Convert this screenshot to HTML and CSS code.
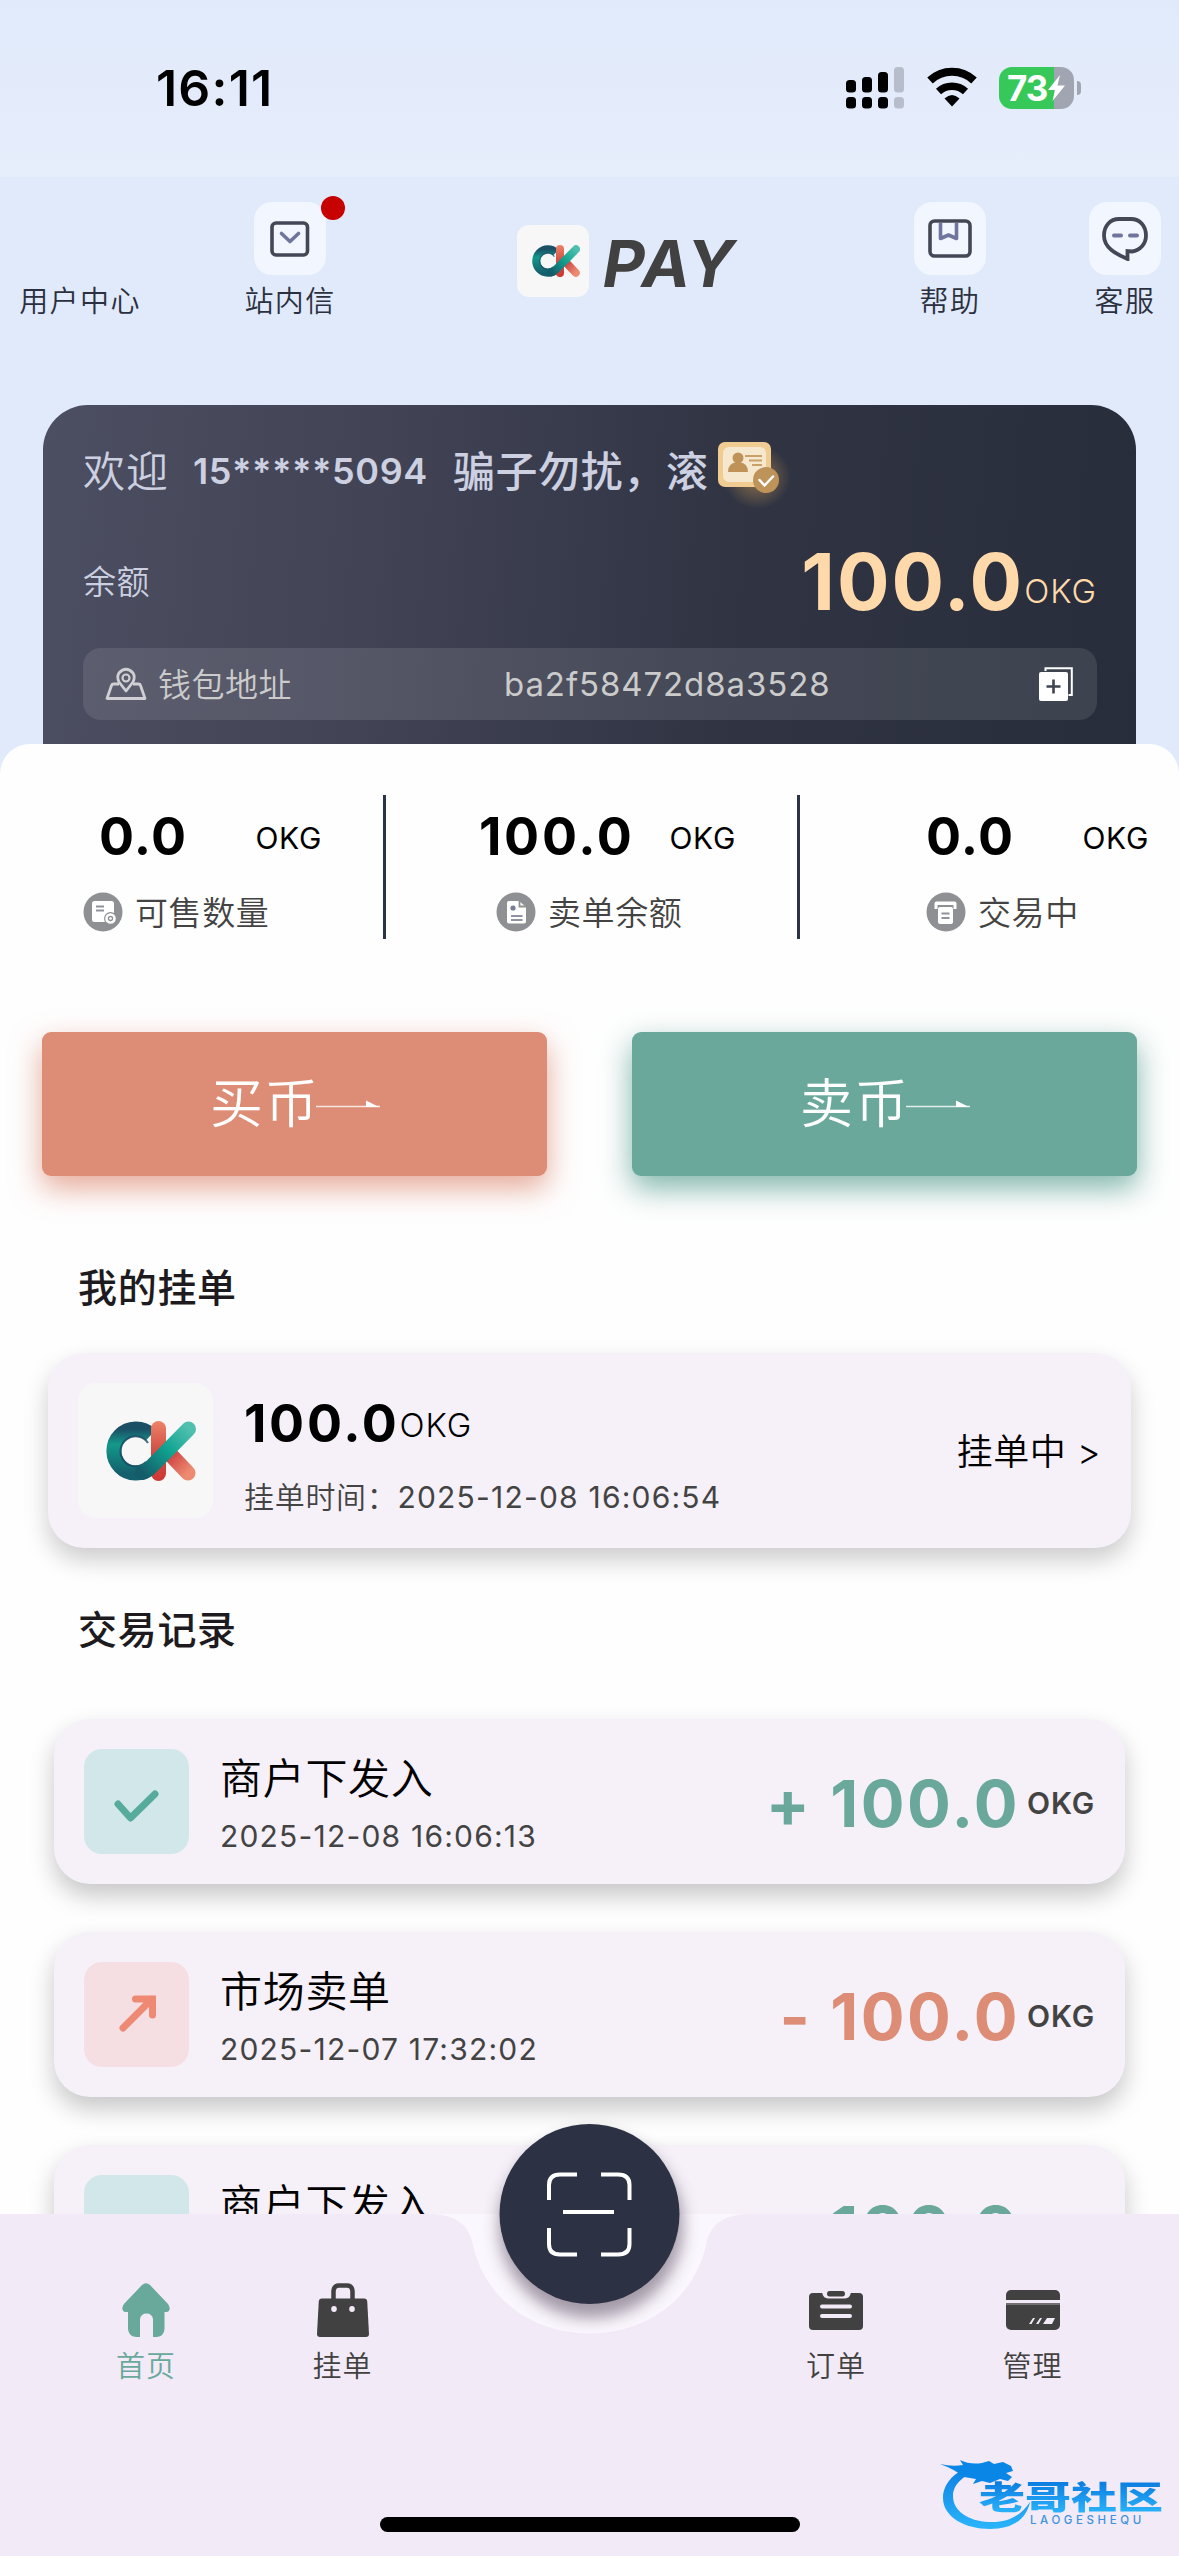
FILE: index.html
```html
<!DOCTYPE html>
<html lang="zh-CN">
<head>
<meta charset="utf-8">
<title>PAY</title>
<link rel="stylesheet" href="styles.css">
</head>
<body>
<svg class="defs" width="0" height="0" aria-hidden="true">
  <defs>
    <linearGradient id="teal" x1="0" y1="0" x2="0" y2="1"><stop offset="0" stop-color="#1b4f66"/><stop offset=".35" stop-color="#12998a"/><stop offset="1" stop-color="#14606c"/></linearGradient>
    <linearGradient id="tealArm" x1="0" y1="1" x2="1" y2="0"><stop offset="0" stop-color="#145c69"/><stop offset=".55" stop-color="#11a491"/><stop offset="1" stop-color="#4fbfae"/></linearGradient>
    <linearGradient id="red" x1="0" y1="0" x2="0" y2="1"><stop offset="0" stop-color="#ee8268"/><stop offset=".5" stop-color="#d04e45"/><stop offset="1" stop-color="#cf3733"/></linearGradient>
    <linearGradient id="redLeg" x1="0" y1="0" x2="1" y2="1"><stop offset="0" stop-color="#c8393a"/><stop offset="1" stop-color="#ee8a72"/></linearGradient>
    <linearGradient id="blue" x1="0" y1="0" x2="0" y2="1"><stop offset="0" stop-color="#0a7be0"/><stop offset="1" stop-color="#2bb5fb"/></linearGradient>
    <symbol id="ok" viewBox="0 0 90 60">
      <path d="M45 46A22 22 0 1 1 45 14" fill="none" stroke="url(#teal)" stroke-width="15"/>
      <path d="M40 41A15 15 0 1 1 42 22" fill="none" stroke="#174a60" stroke-width="2" opacity=".8"/>
      <rect x="45" y="0" width="15" height="60" rx="7.5" fill="url(#red)"/>
      <path d="M62 31L82 52" stroke="url(#redLeg)" stroke-width="15" stroke-linecap="round"/>
      <path d="M82.5 8L45 46Q41 50 36 51.500" fill="none" stroke="url(#tealArm)" stroke-width="15" stroke-linecap="round"/>
    </symbol>
    <symbol id="check" viewBox="0 0 105 105"><path d="M34 55L46.500 69L71 45" fill="none" stroke="#57ab9c" stroke-width="7" stroke-linecap="round" stroke-linejoin="round"/></symbol>
    <symbol id="up" viewBox="0 0 105 105"><path d="M39 66L68 37M51.500 37H68.500V53" fill="none" stroke="#ee8a74" stroke-width="7" stroke-linecap="round" stroke-linejoin="miter"/></symbol>
  </defs>
</svg>

<div class="status">
  <div class="time">16:11</div>
  <div class="status-icons">
    <svg width="59" height="42" viewBox="0 0 59 42"><g><rect x="0" y="13" width="10" height="12.500" rx="3.500"/><rect x="16" y="10" width="10" height="15.500" rx="3.500"/><rect x="32" y="5" width="10" height="20.500" rx="3.500"/><rect x="0" y="30" width="10" height="11.500" rx="3.500"/><rect x="16" y="30" width="10" height="11.500" rx="3.500"/><rect x="32" y="30" width="10" height="11.500" rx="3.500"/></g><g fill="#b8bdcb"><rect x="48" y="0" width="10" height="25.500" rx="3.500"/><rect x="48" y="30" width="10" height="11.500" rx="3.500"/></g></svg>
    <svg class="wifi" width="52" height="42" viewBox="0 0 52 42"><path d="M4 13.500A32 32 0 0 1 48 13.500" fill="none" stroke="#000" stroke-width="8"/><path d="M12.500 24.500A20 20 0 0 1 39.500 24.500" fill="none" stroke="#000" stroke-width="7.500"/><path d="M26 39.500L18.500 31.500Q26 24.500 33.500 31.500Z"/></svg>
    <div class="battery"><span>73</span><svg width="17" height="26" viewBox="0 0 17 26"><path d="M12 0L0 15H7L4.500 26L17 10.500H9.500Z" fill="#fff"/></svg></div>
    <div class="nub"></div>
  </div>
</div>

<header class="header">
  <div class="tool"><div class="tool-blank"></div><span>用户中心</span></div>
  <div class="tool">
    <div class="tool-icon"><svg width="40" height="36" viewBox="0 0 40 36"><rect x="2" y="2" width="35.500" height="32" rx="4" fill="none" stroke="#444756" stroke-width="3.600"/><path d="M11.500 12.500L20 20.500L28.500 12.500" fill="none" stroke="#6f759c" stroke-width="3.600" stroke-linecap="round" stroke-linejoin="round"/></svg><i class="dot"></i></div>
    <span>站内信</span>
  </div>
  <div class="brand"><div class="brand-logo"><svg width="48" height="32"><use href="#ok"/></svg></div><b>PAY</b></div>
  <div class="tool">
    <div class="tool-icon"><svg width="44" height="42" viewBox="0 0 44 42"><rect x="2" y="3" width="40" height="35" rx="4.500" fill="none" stroke="#444756" stroke-width="3.600"/><path d="M12.500 5V20.500L20.500 17L28.500 20.500V5" fill="none" stroke="#6f759c" stroke-width="3.600" stroke-linejoin="round"/></svg></div>
    <span>帮助</span>
  </div>
  <div class="tool last">
    <div class="tool-icon chat"><svg width="46" height="44" viewBox="0 0 46 44"><path d="M17 2H29C38 2 44 9 44 18.500C44 27 38 33.500 30 34.500L25.500 34V42C14 37 2 31 2 18.500C2 9 8 2 17 2Z" fill="none" stroke="#444756" stroke-width="3.800"/><path d="M12 18.500H19M28 18.500H35" stroke="#6f759c" stroke-width="4" stroke-linecap="round"/></svg></div>
    <span>客服</span>
  </div>
</header>

<section class="wallet">
  <div class="welcome">
    <span class="hi">欢迎</span><b class="phone">15*****5094</b><b class="nick">骗子勿扰，滚</b>
    <svg class="badge" width="88" height="88" viewBox="0 0 88 88"><defs><radialGradient id="glow"><stop offset="0" stop-color="#d9a354" stop-opacity=".6"/><stop offset=".5" stop-color="#d9a354" stop-opacity=".28"/><stop offset="1" stop-color="#d9a354" stop-opacity="0"/></radialGradient></defs><ellipse cx="44" cy="40" rx="34" ry="32" fill="url(#glow)"/><rect x="5" y="5" width="53" height="45" rx="7" fill="#f0cc92"/><rect x="10" y="10" width="43" height="35" rx="6" fill="#f6e8cf"/><circle cx="25" cy="21" r="5.500" fill="#bf9358"/><path d="M15 35Q15 25 25 25.500Q35 25 35 35Z" fill="#bf9358"/><path d="M32 19H49M36 23.500H49M39 28H49" stroke="#caa069" stroke-width="2"/><circle cx="53" cy="43" r="13" fill="#bd935a"/><path d="M46.500 43L51.500 48.500L60 39.500" fill="none" stroke="#fff" stroke-width="2.500" stroke-linecap="round"/></svg>
  </div>
  <div class="balance"><span>余额</span><div class="total"><b>100.0</b><em>OKG</em></div></div>
  <div class="address">
    <svg width="42" height="34" viewBox="0 0 42 34"><path d="M14 17H8.500Q7 17 6.500 18.500L2 31.500H40L35.500 18.500Q35 17 33.500 17H28" fill="none" stroke="#cfcfd4" stroke-width="2.800" stroke-linejoin="round"/><path d="M21 24L14 15Q11.500 10 14 6Q21 -1.500 28 6Q30.500 10 28 15Z" fill="none" stroke="#cfcfd4" stroke-width="2.800" stroke-linejoin="round"/><circle cx="21" cy="11" r="3.500" fill="none" stroke="#cfcfd4" stroke-width="2.200"/></svg>
    <span class="addr-label">钱包地址</span><span class="hash">ba2f58472d8a3528</span>
    <svg class="copy" width="34" height="34" viewBox="0 0 34 34"><path d="M6.500 4V1.200H32.800V28H29.500" fill="none" stroke="#fff" stroke-width="2"/><rect x="0" y="5" width="29" height="29" rx="2" fill="#fff"/><path d="M14.500 12.500V26.500M7.500 19.500H21.500" stroke="#3f444f" stroke-width="2.600"/></svg>
  </div>
</section>

<main class="panel">
  <div class="stats">
    <div class="stat s1"><div class="figures"><b>0.0</b><em>OKG</em></div>
      <div class="caption"><svg width="40" height="40" viewBox="0 0 40 40"><circle cx="20" cy="20" r="19.500" fill="#8f9093"/><rect x="9" y="9" width="22" height="21" rx="2.500" fill="#fff"/><path d="M13 14.500H21M13 18.500H21" stroke="#8f92a0" stroke-width="2"/><circle cx="27.500" cy="26.500" r="6.500" fill="#8f9093"/><circle cx="27.500" cy="26.500" r="4" fill="#8f9093" stroke="#fff" stroke-width="2.600"/><circle cx="27.500" cy="26.500" r="1.300" fill="#fff"/></svg><span>可售数量</span></div></div>
    <div class="stat s2"><div class="figures"><b>100.0</b><em>OKG</em></div>
      <div class="caption"><svg width="40" height="40" viewBox="0 0 40 40"><circle cx="20" cy="20" r="19.500" fill="#8f9093"/><path d="M13 9H23L30 15V29.500Q30 31.500 28 31.500H13Q11 31.500 11 29.500V11Q11 9 13 9Z" fill="#fff"/><path d="M23.500 9V14.500H30" fill="none" stroke="#8f9093" stroke-width="1.800"/><circle cx="17" cy="16" r="2.600" fill="#777c94"/><path d="M15 24H26.500M15 28H26.500" stroke="#8f92a0" stroke-width="2"/></svg><span>卖单余额</span></div></div>
    <div class="stat s3"><div class="figures"><b>0.0</b><em>OKG</em></div>
      <div class="caption"><svg width="40" height="40" viewBox="0 0 40 40"><circle cx="20" cy="20" r="19.500" fill="#8f9093"/><path d="M8.500 17V11.500Q8.500 9.500 10.500 9.500H28.500Q30.500 9.500 30.500 11.500V17H27.500V13H11.500V17Z" fill="#fff"/><rect x="12" y="15" width="15" height="17" rx="2" fill="#fff"/><path d="M15.500 21.500H23.500M15.500 26H23.500" stroke="#8f92a0" stroke-width="2"/></svg><span>交易中</span></div></div>
  </div>

  <div class="actions">
    <button class="buy"><span>买币</span><svg width="64" height="12" viewBox="0 0 64 12"><path d="M0 9.500H64" stroke="#fff" stroke-width="1.600" opacity=".8"/><path d="M50 3.500L63 10H50Z" fill="#fff"/></svg></button>
    <button class="sell"><span>卖币</span><svg width="64" height="12" viewBox="0 0 64 12"><path d="M0 9.500H64" stroke="#fff" stroke-width="1.600" opacity=".8"/><path d="M50 3.500L63 10H50Z" fill="#fff"/></svg></button>
  </div>

  <h2>我的挂单</h2>
  <div class="order">
    <div class="order-logo"><svg width="90" height="60"><use href="#ok"/></svg></div>
    <div class="order-info"><div class="order-sum"><b>100.0</b><em>OKG</em></div><p>挂单时间：<span>2025-12-08 16:06:54</span></p></div>
    <span class="order-state">挂单中 &gt;</span>
  </div>

  <h2 class="records-title">交易记录</h2>
  <div class="records">
    <div class="record"><svg class="mark in" width="105" height="105"><use href="#check"/></svg><div class="what"><span>商户下发入</span><time>2025-12-08 16:06:13</time></div><div class="sum plus"><b>+ 100.0</b><em>OKG</em></div></div>
    <div class="record"><svg class="mark out" width="105" height="105"><use href="#up"/></svg><div class="what"><span>市场卖单</span><time>2025-12-07 17:32:02</time></div><div class="sum minus"><b>- 100.0</b><em>OKG</em></div></div>
    <div class="record"><svg class="mark in" width="105" height="105"><use href="#check"/></svg><div class="what"><span>商户下发入</span></div><div class="sum plus"><b>+ 100.0</b><em>OKG</em></div></div>
  </div>
</main>

<nav class="nav">
  <svg class="nav-bg" width="1179" height="342" viewBox="0 0 1179 342"><rect x="420" y="0" width="340" height="122" fill="#fbf7fe"/><path d="M0 0H428C455 0 469 10 473 31C485 86 534 119.500 589.500 119.500S694 86 706 31C710 10 724 0 751 0H1179V342H0Z" fill="#f2eaf6"/></svg>
  <svg class="fab" width="240" height="240" viewBox="0 0 240 240"><defs><filter id="fs" x="-20%" y="-20%" width="140%" height="140%"><feGaussianBlur stdDeviation="8"/></filter></defs><circle cx="122" cy="132" r="92" fill="#4a3a50" opacity=".5" filter="url(#fs)"/><circle cx="120.500" cy="120" r="90" fill="#2c3244"/><path d="M108 80.500H91Q80 80.500 80 91V106M132 80.500H149Q160.500 80.500 160.500 91V106M80 134V150Q80 160.500 91 160.500H108M160.500 134V150Q160.500 160.500 149 160.500H132M94 118H145" fill="none" stroke="#fff" stroke-width="4"/></svg>
  <div class="tabs">
    <a class="tab active"><svg width="54" height="54" viewBox="0 0 54 54"><path d="M23 2Q27 -1.500 31 2L49 21Q53 27 48 29H45.500V46Q45 53 38 54H34V36Q33 30.500 27.500 30.500Q22 30.500 21 36V54H17Q9.500 53 9 46V29H6Q1 27 5 21Z" fill="#69a99b"/></svg><span>首页</span></a>
    <a class="tab"><svg width="54" height="54" viewBox="0 0 54 54"><path d="M17.500 18V8Q18 2.500 23 2.500H31Q36 2.500 36.500 8V18" fill="none" stroke="#414141" stroke-width="4.500"/><path d="M5.500 15.500H48.500Q51 15.500 51.200 18L53 51Q53 54 50 54H4Q1 54 1 51L2.800 18Q3 15.500 5.500 15.500Z" fill="#414141"/><ellipse cx="18" cy="26" rx="2.800" ry="3" fill="#f2eaf6"/><ellipse cx="36" cy="26" rx="2.800" ry="3" fill="#f2eaf6"/></svg><span>挂单</span></a>
    <i></i>
    <a class="tab"><svg width="54" height="54" viewBox="0 0 54 54"><rect x="0" y="10" width="54" height="37" rx="4" fill="#414141"/><path d="M13 9H42Q41 15.500 36 15.500H19Q14 15.500 13 9Z" fill="#f2eaf6"/><rect x="18" y="8" width="18" height="5.500" rx="2.700" fill="#414141"/><path d="M13 23.500H41M13 33H41" stroke="#f2eaf6" stroke-width="4" stroke-linecap="round"/></svg><span>订单</span></a>
    <a class="tab"><svg width="54" height="54" viewBox="0 0 54 54"><rect x="0" y="7" width="54" height="40" rx="5" fill="#414141"/><path d="M0 18.500H54" stroke="#f2eaf6" stroke-width="3"/><path d="M0 21H54" stroke="#a59fa8" stroke-width="1"/><path d="M23 41L27 35H29L25.500 41ZM30 41L34 35H36L32.500 41ZM37 41L41 35H49L46 41Z" fill="#f2eaf6"/></svg><span>管理</span></a>
  </div>
  <div class="home-bar"></div>
  <div class="watermark">
    <svg width="110" height="80" viewBox="0 0 110 80"><path d="M49 13C18 15 3 32 3 48C3 67 25 79 50 79C72 79 86 70 90 52C80 67 66 73 49 72C28 71 13 61 13 46C13 34 24 23 48 18Z" fill="url(#blue)"/><path d="M0 14Q12 17 23 15L20 10Q30 15 42 13L49 11L54 14L63 12L71 16L73 21L66 23L72 27L68 31L60 29L50 33L42 31L33 34L36 29L24 27Q14 19 0 14Z" fill="#0a86e6"/></svg>
    <div class="wm-text"><b>老哥社区</b><small>LAOGESHEQU</small></div>
  </div>
</nav>
</body>
</html>
```

FILE: styles.css
```css
* { box-sizing: border-box; margin: 0; padding: 0; }
body {
  position: relative;
  width: 1179px;
  height: 2556px;
  overflow: hidden;
  background: #e1eafb;
  color: #000;
  font-family: Inter, "Noto Sans CJK SC", sans-serif;
  font-weight: 350;
  white-space: nowrap;
}
em, i { font-style: normal; }
svg { display: block; flex: none; }
.defs { position: absolute; }

/* status bar */
.status {
  height: 177px;
  display: flex;
  justify-content: space-between;
  padding: 67px 98px 0 156px;
  background: linear-gradient(#e1eafb, #e6edfb);
}
.time { font-size: 50px; font-weight: 600; line-height: 42px; letter-spacing: 1.2px; }
.status-icons { display: flex; height: 42px; }
.wifi { margin-left: 21px; }
.battery {
  display: flex;
  align-items: center;
  width: 75px;
  height: 42px;
  margin-left: 21px;
  padding-left: 8px;
  border-radius: 13px;
  background: linear-gradient(90deg, #37c85a 55px, #a1a5b1 55px);
  color: #fff;
  font-size: 35px;
  font-weight: 700;
  letter-spacing: -1px;
}
.battery svg { margin-left: 1px; }
.nub { width: 4px; height: 14px; margin: 14px 0 0 3px; border-radius: 0 4px 4px 0; background: #a1a5b1; }

/* header */
.header { height: 228px; display: grid; grid-template-columns: 160px 260px 413px 234px 112px; }
.tool { display: flex; flex-direction: column; align-items: center; padding-top: 25px; font-size: 29px; letter-spacing: 1.4px; line-height: 40px; color: #2b3040; }
.tool span { margin: 7px -20px 0; }
.tool.last { padding-left: 4px; }
.tool-blank { height: 73px; }
.tool-icon { position: relative; display: flex; align-items: center; justify-content: center; width: 72px; height: 73px; border-radius: 18px; background: #f2f6fe; }
.dot { position: absolute; left: 67px; top: -6px; width: 24px; height: 24px; border-radius: 50%; background: #c70000; }
.brand { display: flex; justify-content: center; height: 72px; margin-top: 48px; gap: 14px; align-items: center; }
.brand-logo { display: flex; align-items: center; justify-content: center; width: 72px; height: 72px; padding-left: 6px; border-radius: 12px; background: #f7f7f7; }
.brand b { padding-top: 4px; font-size: 65px; font-weight: 700; font-style: italic; letter-spacing: 2px; color: #414141; }

/* wallet card */
.wallet { height: 339px; margin: 0 43px; padding: 17px 39px 0 40px; border-radius: 45px 45px 0 0; background: linear-gradient(95deg, #4c4e61, #424456 30%, #303443 62%, #282d3c); color: #ccd0e0; }
.welcome { display: flex; align-items: center; height: 98px; font-size: 42px; letter-spacing: 1px; }
.hi { padding-bottom: 6px; }
.phone { margin-left: 24px; font-size: 36px; font-weight: 600; letter-spacing: .6px; }
.nick { margin-left: 25px; padding-bottom: 6px; font-weight: 500; letter-spacing: .6px; }
.badge { margin: 20px 0 0 5px; }
.balance { display: flex; justify-content: space-between; align-items: center; height: 122px; margin-bottom: 6px; }
.balance > span { padding-bottom: 2px; font-size: 33px; letter-spacing: .5px; }
.total { display: flex; align-items: center; color: #ffd9a9; }
.total b { font-size: 78px; font-weight: 700; letter-spacing: 2px; }
.total em { padding-top: 19px; font-size: 33px; letter-spacing: 1px; }
.address { display: flex; align-items: center; height: 72px; padding: 0 24px 0 22px; border-radius: 18px; background: rgba(255, 255, 255, .1); font-size: 33px; color: #cbcbcb; }
.addr-label { margin-left: 11px; padding-bottom: 3px; letter-spacing: .5px; }
.hash { margin-left: 212px; font-weight: 400; letter-spacing: .9px; }
.copy { margin-left: auto; }

/* white panel */
.panel { height: 1812px; padding-top: 51px; border-radius: 30px 30px 0 0; background: #fefefe; }
.stats { display: grid; grid-template-columns: 386px 414px 379px; height: 144px; }
.stat { border-right: 3px solid #2b3346; }
.stat:last-child { border: 0; }
.figures { display: flex; align-items: center; justify-content: space-between; height: 82px; }
.figures b { font-size: 52px; font-weight: 700; letter-spacing: 1.3px; }
.s2 .figures b { letter-spacing: 2.700px; }
.figures em { padding-top: 4px; font-size: 30px; font-weight: 400; letter-spacing: .7px; }
.s1 .figures { padding: 0 61px 0 99px; }
.s2 .figures { padding: 0 61px 0 93px; }
.s3 .figures { padding: 0 30px 0 126px; }
.caption { display: flex; align-items: center; height: 40px; margin: 15px 0 0 83px; font-size: 33px; letter-spacing: .6px; color: #434343; }
.s2 .caption { margin-left: 110px; }
.s3 .caption { margin-left: 126px; }
.caption span { margin-left: 12px; padding-bottom: 3px; }

.actions { display: flex; justify-content: space-between; margin-top: 93px; padding: 0 42px; }
.actions button { display: flex; align-items: center; width: 505px; height: 144px; padding-left: 168px; border: 0; border-radius: 9px; color: #fff; font: inherit; font-size: 53px; letter-spacing: 1.7px; }
.actions span { padding-bottom: 8px; }
.actions svg { margin: 0 0 2px -3px; }
.buy { background: #dd8c76; box-shadow: 0 12px 30px rgba(221, 140, 118, .75); }
.sell { background: #69a89b; box-shadow: 0 12px 30px rgba(105, 168, 155, .85); }

h2 { margin: 84px 0 0 78px; font-size: 39px; font-weight: 500; line-height: 56px; letter-spacing: .7px; color: #1d1b20; }
.order { display: flex; align-items: center; height: 195px; margin: 37px 48px 0; padding: 0 30px; border-radius: 36px; background: #f6f1f9; box-shadow: 0 12px 24px rgba(0, 0, 0, .2); }
.order-logo { display: flex; align-items: center; justify-content: center; width: 135px; height: 135px; padding-left: 11px; border-radius: 18px; background: #f7f7f7; }
.order-info { height: 135px; margin-left: 31px; padding-top: 9px; }
.order-sum { display: flex; align-items: center; height: 62px; }
.order-sum b { font-size: 52px; font-weight: 700; letter-spacing: 2.700px; }
.order-sum em { padding-top: 3px; font-size: 33px; letter-spacing: 1px; }
.order-info p { height: 40px; margin-top: 23px; font-size: 30px; line-height: 40px; letter-spacing: .7px; color: #434343; }
.order-info p span { font-weight: 400; letter-spacing: 1.200px; }
.order-state { margin-left: auto; padding-bottom: 3px; font-size: 36px; letter-spacing: .5px; }

.records-title { margin-top: 54px; }
.records { display: flex; flex-direction: column; gap: 48px; margin: 61px 54px 0; }
.record { display: flex; align-items: center; height: 165px; padding: 0 30px; border-radius: 36px; background: #f6f1f9; box-shadow: 0 12px 24px rgba(0, 0, 0, .22); }
.mark { border-radius: 18px; }
.in { background: #d2e7e9; }
.out { background: #f6dfe3; }
.what { display: flex; flex-direction: column; height: 105px; margin-left: 31px; }
.what span { font-size: 42px; line-height: 60px; letter-spacing: .7px; }
.what time { margin-top: 7px; font-size: 30px; font-weight: 400; line-height: 40px; letter-spacing: 1.200px; color: #434343; }
.sum { display: flex; align-items: center; margin-left: auto; padding-top: 3px; }
.sum b { font-size: 65px; font-weight: 700; letter-spacing: 2.500px; }
.sum em { margin-left: 7px; font-size: 30px; font-weight: 600; letter-spacing: .8px; color: #434343; }
.plus b { color: #69a89b; }
.minus b { color: #dd8c76; }

/* bottom navigation lies over the scrolling list */
.nav { position: absolute; left: 0; bottom: 0; width: 1179px; height: 342px; }
.nav-bg { position: absolute; inset: 0; }
.fab { position: absolute; left: 469px; top: -120px; }
.tabs { position: relative; display: grid; grid-template-columns: 196px 197px 297px 196px 197px; padding: 69px 48px 0; }
.tab { display: flex; flex-direction: column; align-items: center; font-size: 29px; line-height: 40px; letter-spacing: 1px; color: #414141; }
.tab span { margin-top: 10px; }
.active { color: #69a99b; }
.home-bar { position: absolute; left: 380px; bottom: 24px; width: 420px; height: 15px; border-radius: 8px; background: #000; }
.watermark { position: absolute; left: 940px; top: 236px; }
.wm-text { position: absolute; left: 39px; top: 31px; width: 190px; }
.wm-text b { display: block; height: 47px; margin-bottom: -16px; font-size: 46px; font-weight: 900; line-height: 47px; transform: scaleY(.7); transform-origin: top; background: linear-gradient(#0a7be0, #2bb5fb); background-clip: text; color: transparent; }
.wm-text small { display: block; margin-left: 51px; font-size: 11.500px; font-weight: 500; line-height: 16px; letter-spacing: 3.600px; color: #3d93dd; }
```
